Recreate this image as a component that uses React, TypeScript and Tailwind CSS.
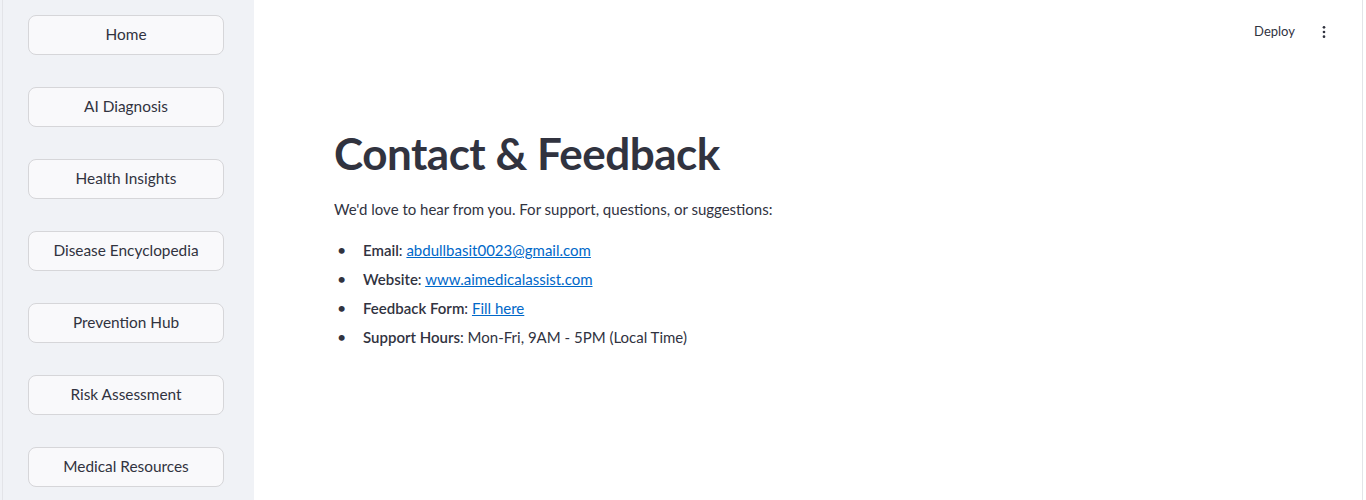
import React from 'react';

const pages = [
  'Home',
  'AI Diagnosis',
  'Health Insights',
  'Disease Encyclopedia',
  'Prevention Hub',
  'Risk Assessment',
  'Medical Resources',
];

const font = { fontFamily: '"Source Sans Pro", Lato, "Noto Sans", sans-serif' };

const Item: React.FC<{ label: string; children: React.ReactNode }> = ({ label, children }) => (
  <li className="flex h-[29px] items-center">
    <span className="w-[29px] shrink-0 pl-[3px] text-[16px]">•</span>
    <span>
      <b className="font-semibold">{label}</b>: {children}
    </span>
  </li>
);

const App: React.FC = () => {
  return (
    <div className="flex h-[500px] w-[1366px] overflow-hidden bg-white text-[#31333f]" style={font}>
      <aside className="flex w-[254px] shrink-0 bg-[#f0f2f6]">
        <div className="w-[3px] shrink-0 border-r border-[#e3e4e8]" />
        <div className="flex flex-col gap-8 pl-[25px] pt-[15px]">
          {pages.map((p) => (
            <button
              key={p}
              className="h-[40px] w-[196px] rounded-lg border border-[#d6d6d9] bg-[#f9f9fb] text-[15.4px] text-[#31333f]"
            >
              {p}
            </button>
          ))}
        </div>
      </aside>

      <main className="relative flex-1">
        <header className="absolute right-0 top-0 flex h-[64px] items-center gap-[21px] pr-[30px]">
          <span className="text-[13px] text-[#31333f]">Deploy</span>
          <svg width="16" height="16" viewBox="0 0 24 24" fill="#31333f">
            <circle cx="12" cy="5" r="2" />
            <circle cx="12" cy="12" r="2" />
            <circle cx="12" cy="19" r="2" />
          </svg>
        </header>

        <div className="px-[80px] pt-[127px]">
          <h1 className="text-[44px] font-bold leading-[1.2] tracking-[-0.5px]">Contact &amp; Feedback</h1>
          <p className="mt-[17px] text-[15px] leading-[24px]">
            We'd love to hear from you. For support, questions, or suggestions:
          </p>
          <ul className="mt-[15px] text-[15px]">
            <Item label="Email">
              <a className="text-[#0068c9] underline" href="#">abdullbasit0023@gmail.com</a>
            </Item>
            <Item label="Website">
              <a className="text-[#0068c9] underline" href="#">www.aimedicalassist.com</a>
            </Item>
            <Item label="Feedback Form">
              <a className="text-[#0068c9] underline" href="#">Fill here</a>
            </Item>
            <Item label="Support Hours">Mon-Fri, 9AM - 5PM (Local Time)</Item>
          </ul>
        </div>
      </main>

      <div className="w-[4px] shrink-0 border-l border-[#e3e4e8] bg-white" />
    </div>
  );
};

export default App;
